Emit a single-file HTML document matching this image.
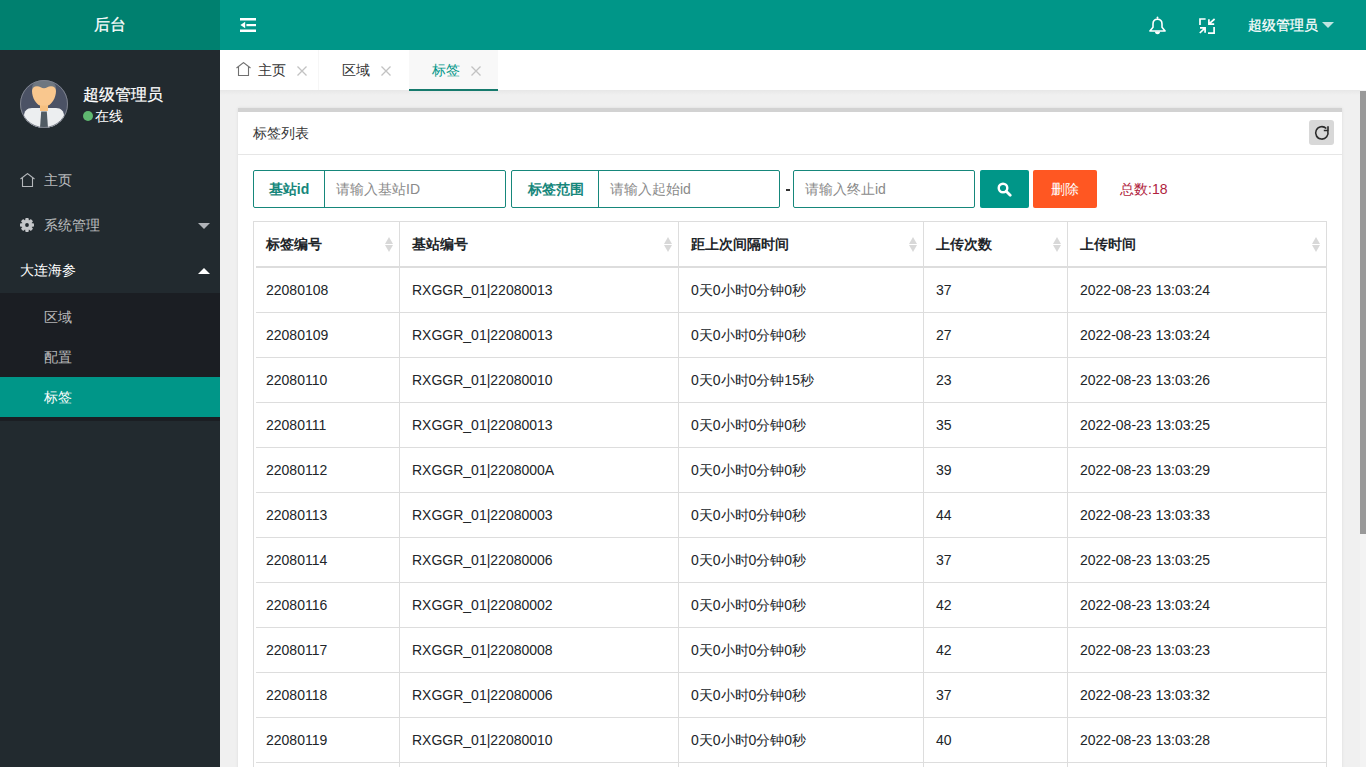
<!DOCTYPE html>
<html><head><meta charset="utf-8"><title>后台</title>
<style>
*{margin:0;padding:0;box-sizing:border-box}
html,body{width:1366px;height:767px;overflow:hidden;background:#f0f0f0;font-family:"Liberation Sans",sans-serif;font-size:14px;color:#333}
.abs{position:absolute}
#logo{position:absolute;left:0;top:0;width:220px;height:50px;background:#00806f;color:#fff;font-size:16px;-webkit-text-stroke:0.25px #fff;line-height:50px;text-align:center}
#hdr{position:absolute;left:220px;top:0;width:1146px;height:50px;background:#009688}
#side{position:absolute;left:0;top:50px;width:220px;height:717px;background:#222a2f}
#tabs{position:absolute;left:220px;top:50px;width:1146px;height:40px;background:#fff}
#tabshadow{position:absolute;left:220px;top:90px;width:1140px;height:5px;background:linear-gradient(#e7e7e7,#f0f0f0)}
#content{position:absolute;left:0;top:0;width:1360px;height:767px;overflow:hidden;pointer-events:none}
#cbg{position:absolute;left:220px;top:90px;width:1140px;height:677px;background:#f0f0f0}
#panel{position:absolute;left:238px;top:108px;width:1104px;height:700px;background:#fff;border-top:4px solid #d2d2d2;box-shadow:0 0 3px rgba(0,0,0,.09)}
.ln{position:absolute;background:#dddddd}
.ln2{position:absolute;background:#dddddd}
.th{position:absolute;font-weight:bold;color:#212529;white-space:nowrap}
.td{position:absolute;color:#212529;white-space:nowrap}
.sort{position:absolute;width:8px;height:15px}
.sort:before{content:"";position:absolute;left:0;top:0;border-left:4px solid transparent;border-right:4px solid transparent;border-bottom:7px solid #d8d8d8}
.sort:after{content:"";position:absolute;left:0;top:8px;border-left:4px solid transparent;border-right:4px solid transparent;border-top:7px solid #d8d8d8}
#sb-track{position:absolute;left:1360px;top:90px;width:6px;height:677px;background:#f3f3f3}
#sb-thumb{position:absolute;left:1360px;top:91px;width:6px;height:443px;background:#999}
.menu{position:absolute;left:0;width:220px;color:rgba(255,255,255,.7);white-space:nowrap}
.sub{position:absolute;left:0;top:243px;width:220px;height:128px;background:#1b1e23}
.box{position:absolute;top:170px;height:38px;border:1px solid #16877b;border-radius:2px;background:#fff;display:flex}
.lab{height:36px;line-height:36px;text-align:center;color:#16877b;font-weight:bold;border-right:1px solid #16877b;flex:none}
.ph{height:36px;line-height:36px;padding-left:11px;color:#8a8a8a;white-space:nowrap}

</style></head><body>
<div id="logo">后台</div>
<div id="hdr"></div>
<svg class="abs" style="left:240px;top:17px" width="16" height="16" viewBox="0 0 16 16">
<rect x="0" y="1" width="16" height="2.5" fill="#fff"/>
<rect x="6.4" y="7" width="9.6" height="2.2" fill="#fff"/>
<polygon points="0.4,8 5.2,4.7 5.2,11.3" fill="#fff"/>
<rect x="0" y="12.5" width="16" height="2.5" fill="#fff"/>
</svg>
<svg class="abs" style="left:1148px;top:15px" width="19" height="21" viewBox="0 0 19 21">
<path d="M9.5 4.3 C6.6 4.3 5 6.3 5 9 L5 12.3 L1.9 16 L17.1 16 L14 12.3 L14 9 C14 6.3 12.4 4.3 9.5 4.3 Z" fill="none" stroke="#fff" stroke-width="1.6" stroke-linejoin="round"/>
<path d="M7 16.6 A2.5 2.6 0 0 0 12 16.6 Z" fill="#fff"/>
<rect x="8.7" y="1.4" width="1.6" height="2.6" rx=".8" fill="#fff"/>
</svg>
<svg class="abs" style="left:1199px;top:18px" width="17" height="17" viewBox="0 0 17 17" fill="none" stroke="#fff" stroke-width="1.7">
<path d="M1 7.1 V1 H6.6"/>
<path d="M15.1 9 V15.1 H9"/>
<path d="M9.9 1.2 V6.1 H15.2 M15.6 1 L10.4 5.6"/>
<path d="M1 9.9 H6.1 V14.8 M0.8 15 L5.6 10.4"/>
</svg>
<div class="abs" style="left:1248px;top:0;height:50px;line-height:50px;color:#fff;font-size:14px;-webkit-text-stroke:0.25px #fff;white-space:nowrap">超级管理员</div>
<div class="abs" style="left:1322px;top:22px;width:0;height:0;border-left:6px solid transparent;border-right:6px solid transparent;border-top:6px solid rgba(255,255,255,.75)"></div>
<div id="tabs"></div>
<div class="abs" style="left:409px;top:50px;width:89px;height:40px;background:#f8f8f8"></div>
<div class="abs" style="left:318px;top:50px;width:1px;height:40px;background:#f6f6f6"></div>
<svg class="abs" style="left:236px;top:62px" width="15" height="15" viewBox="0 0 15 15" fill="none" stroke="#707070" stroke-width="1.1">
<path d="M0.5 6 L7.5 0.6 L14.5 6 M2.5 4.5 V13.5 H12.5 V4.5"/>
</svg>
<div class="abs" style="left:258px;top:50px;height:40px;line-height:40px;color:#333;white-space:nowrap">主页</div>
<div class="abs" style="left:342px;top:50px;height:40px;line-height:40px;color:#333;white-space:nowrap">区域</div>
<div class="abs" style="left:432px;top:50px;height:40px;line-height:40px;color:#009688;white-space:nowrap">标签</div>
<svg class="abs" style="left:297px;top:66px" width="10" height="10" viewBox="0 0 10 10" stroke="#c2c2c2" stroke-width="1.3"><path d="M0.5 0.5 L9.5 9.5 M9.5 0.5 L0.5 9.5"/></svg>
<svg class="abs" style="left:381px;top:66px" width="10" height="10" viewBox="0 0 10 10" stroke="#c2c2c2" stroke-width="1.3"><path d="M0.5 0.5 L9.5 9.5 M9.5 0.5 L0.5 9.5"/></svg>
<svg class="abs" style="left:471px;top:66px" width="10" height="10" viewBox="0 0 10 10" stroke="#c2c2c2" stroke-width="1.3"><path d="M0.5 0.5 L9.5 9.5 M9.5 0.5 L0.5 9.5"/></svg>

<div id="side"></div>
<svg class="abs" style="left:20px;top:80px" width="48" height="48" viewBox="0 0 48 48">
<defs><clipPath id="cc"><circle cx="24" cy="24" r="24"/></clipPath></defs>
<g clip-path="url(#cc)">
<rect width="48" height="48" fill="#4b5265"/>
<ellipse cx="24" cy="8" rx="12" ry="8" fill="#6f7780"/>
<path d="M4 48 V36 C4 31 7 28 12 28 H36 C41 28 44 31 44 36 V48 Z" fill="#eceef0"/>
<rect x="20" y="23" width="8" height="8" fill="#f6c080"/>
<path d="M12 11 C12 8 14 6.3 17 6.3 C20 6.3 21.5 8.3 24 8.3 C26.5 8.3 28 6.3 31 6.3 C34 6.3 36 8 36 11 C36 18 31.5 24.5 28 25.5 H20 C16.5 24.5 12 18 12 11 Z" fill="#f9c78e"/>
<path d="M21.2 31.5 H26.8 L28 48 H20 Z" fill="#505b63"/>
</g>
<circle cx="24" cy="24" r="23.5" fill="none" stroke="#7d828c" stroke-width="1"/>
</svg>
<div class="abs" style="left:83px;top:84px;font-size:16px;line-height:22px;color:#fff;-webkit-text-stroke:0.25px #fff;white-space:nowrap">超级管理员</div>
<div class="abs" style="left:83px;top:111px;width:10px;height:10px;border-radius:50%;background:#5fb870"></div>
<div class="abs" style="left:95px;top:106px;font-size:14px;line-height:20px;color:#fff;white-space:nowrap">在线</div>
<svg class="abs" style="left:20px;top:173px" width="15" height="15" viewBox="0 0 15 15" fill="none" stroke="#b4b7bb" stroke-width="1.1">
<path d="M0.5 6 L7.5 0.6 L14.5 6 M2.5 4.5 V13.5 H12.5 V4.5"/>
</svg>
<div class="menu" style="top:158px;height:45px;line-height:45px;padding-left:44px">主页</div>
<svg class="abs" style="left:20px;top:218px" width="14" height="14" viewBox="-7 -7 14 14">
<g fill="#c4c6c9">
<circle r="5.1"/>
<rect x="-1.75" y="-7" width="3.5" height="14" rx=".9"/>
<rect x="-1.75" y="-7" width="3.5" height="14" rx=".9" transform="rotate(45)"/>
<rect x="-1.75" y="-7" width="3.5" height="14" rx=".9" transform="rotate(90)"/>
<rect x="-1.75" y="-7" width="3.5" height="14" rx=".9" transform="rotate(135)"/>
</g>
<circle r="1.9" fill="#222a2f"/>
</svg>
<div class="menu" style="top:203px;height:45px;line-height:45px;padding-left:44px">系统管理</div>
<div class="abs" style="left:198px;top:223px;border-left:6px solid transparent;border-right:6px solid transparent;border-top:6px solid #b0b3b8"></div>
<div class="menu" style="top:248px;height:45px;line-height:45px;padding-left:20px;color:#fff">大连海参</div>
<div class="abs" style="left:198px;top:268px;border-left:6px solid transparent;border-right:6px solid transparent;border-bottom:6px solid #fff"></div>
<div class="abs" style="left:0;top:293px;width:220px;height:128px;background:#1b1e23"></div>
<div class="menu" style="top:297px;height:40px;line-height:40px;padding-left:44px">区域</div>
<div class="menu" style="top:337px;height:40px;line-height:40px;padding-left:44px">配置</div>
<div class="menu" style="top:377px;height:40px;line-height:40px;padding-left:44px;background:#009688;color:#fff">标签</div>

<div id="content">
<div id="tabshadow"></div>
<div style="position:absolute;left:409px;top:89px;width:89px;height:2px;background:#167a6d"></div>
<div id="panel"></div>
<div class="abs" style="left:253px;top:112px;height:42px;line-height:42px;color:#333;white-space:nowrap">标签列表</div>
<div class="abs" style="left:238px;top:154px;width:1104px;height:1px;background:#e6e6e6"></div>
<div class="abs" style="left:1309px;top:120px;width:25px;height:25px;border-radius:3px;background:#d8d8d8"></div>
<svg class="abs" style="left:1313px;top:124px" width="18" height="18" viewBox="0 0 18 18" fill="none" stroke="#2b2b2b" stroke-width="1.6">
<path d="M13.3 4.55 A6.2 6.2 0 1 0 14.8 7.1"/>
<path d="M15 2.2 V6.5 H10.8"/>
</svg>
<div class="box" style="left:253px;width:253px"><div class="lab" style="width:71px">基站id</div><div class="ph">请输入基站ID</div></div>
<div class="box" style="left:511px;width:269px"><div class="lab" style="width:87px;padding-left:1px">标签范围</div><div class="ph">请输入起始id</div></div>
<div class="abs" style="left:786px;top:189px;width:4px;height:1.5px;background:#333"></div>
<div class="box" style="left:793px;width:182px"><div class="ph" style="border-left:none">请输入终止id</div></div>
<div class="abs" style="left:980px;top:170px;width:49px;height:38px;border-radius:2px;background:#009688"></div>
<svg class="abs" style="left:997px;top:182px" width="15" height="15" viewBox="0 0 15 15" fill="none" stroke="#fff">
<circle cx="6" cy="6" r="4.3" stroke-width="2.4"/>
<path d="M9.2 9.2 L13.2 13.2" stroke-width="2.8" stroke-linecap="round"/>
</svg>
<div class="abs" style="left:1033px;top:170px;width:64px;height:38px;line-height:38px;border-radius:2px;background:#ff5722;color:#fff;text-align:center">删除</div>
<div class="abs" style="left:1120px;top:170px;height:38px;line-height:38px;color:#b0223c;white-space:nowrap">总数:18</div>

<div class="ln" style="left:253px;top:221px;width:1074px;height:1px"></div>
<div class="ln" style="left:253px;top:221px;width:1px;height:596px"></div>
<div class="ln" style="left:399px;top:221px;width:1px;height:596px"></div>
<div class="ln" style="left:678px;top:221px;width:1px;height:596px"></div>
<div class="ln" style="left:923px;top:221px;width:1px;height:596px"></div>
<div class="ln" style="left:1067px;top:221px;width:1px;height:596px"></div>
<div class="ln" style="left:1326px;top:221px;width:1px;height:596px"></div>
<div class="ln2" style="left:256px;top:266px;width:1071px;height:2px"></div>
<div class="ln" style="left:256px;top:312px;width:1071px;height:1px"></div>
<div class="ln" style="left:256px;top:357px;width:1071px;height:1px"></div>
<div class="ln" style="left:256px;top:402px;width:1071px;height:1px"></div>
<div class="ln" style="left:256px;top:447px;width:1071px;height:1px"></div>
<div class="ln" style="left:256px;top:492px;width:1071px;height:1px"></div>
<div class="ln" style="left:256px;top:537px;width:1071px;height:1px"></div>
<div class="ln" style="left:256px;top:582px;width:1071px;height:1px"></div>
<div class="ln" style="left:256px;top:627px;width:1071px;height:1px"></div>
<div class="ln" style="left:256px;top:672px;width:1071px;height:1px"></div>
<div class="ln" style="left:256px;top:717px;width:1071px;height:1px"></div>
<div class="ln" style="left:256px;top:762px;width:1071px;height:1px"></div>
<div class="ln" style="left:256px;top:807px;width:1071px;height:1px"></div>
<div class="th" style="left:266px;top:222px;height:44px;line-height:44px">标签编号</div>
<div class="sort" style="left:385px;top:237px"></div>
<div class="th" style="left:412px;top:222px;height:44px;line-height:44px">基站编号</div>
<div class="sort" style="left:664px;top:237px"></div>
<div class="th" style="left:691px;top:222px;height:44px;line-height:44px">距上次间隔时间</div>
<div class="sort" style="left:909px;top:237px"></div>
<div class="th" style="left:936px;top:222px;height:44px;line-height:44px">上传次数</div>
<div class="sort" style="left:1053px;top:237px"></div>
<div class="th" style="left:1080px;top:222px;height:44px;line-height:44px">上传时间</div>
<div class="sort" style="left:1312px;top:237px"></div>
<div class="td" style="left:266px;top:268px;height:44px;line-height:44px">22080108</div>
<div class="td" style="left:412px;top:268px;height:44px;line-height:44px">RXGGR_01|22080013</div>
<div class="td" style="left:691px;top:268px;height:44px;line-height:44px">0天0小时0分钟0秒</div>
<div class="td" style="left:936px;top:268px;height:44px;line-height:44px">37</div>
<div class="td" style="left:1080px;top:268px;height:44px;line-height:44px">2022-08-23 13:03:24</div>
<div class="td" style="left:266px;top:313px;height:44px;line-height:44px">22080109</div>
<div class="td" style="left:412px;top:313px;height:44px;line-height:44px">RXGGR_01|22080013</div>
<div class="td" style="left:691px;top:313px;height:44px;line-height:44px">0天0小时0分钟0秒</div>
<div class="td" style="left:936px;top:313px;height:44px;line-height:44px">27</div>
<div class="td" style="left:1080px;top:313px;height:44px;line-height:44px">2022-08-23 13:03:24</div>
<div class="td" style="left:266px;top:358px;height:44px;line-height:44px">22080110</div>
<div class="td" style="left:412px;top:358px;height:44px;line-height:44px">RXGGR_01|22080010</div>
<div class="td" style="left:691px;top:358px;height:44px;line-height:44px">0天0小时0分钟15秒</div>
<div class="td" style="left:936px;top:358px;height:44px;line-height:44px">23</div>
<div class="td" style="left:1080px;top:358px;height:44px;line-height:44px">2022-08-23 13:03:26</div>
<div class="td" style="left:266px;top:403px;height:44px;line-height:44px">22080111</div>
<div class="td" style="left:412px;top:403px;height:44px;line-height:44px">RXGGR_01|22080013</div>
<div class="td" style="left:691px;top:403px;height:44px;line-height:44px">0天0小时0分钟0秒</div>
<div class="td" style="left:936px;top:403px;height:44px;line-height:44px">35</div>
<div class="td" style="left:1080px;top:403px;height:44px;line-height:44px">2022-08-23 13:03:25</div>
<div class="td" style="left:266px;top:448px;height:44px;line-height:44px">22080112</div>
<div class="td" style="left:412px;top:448px;height:44px;line-height:44px">RXGGR_01|2208000A</div>
<div class="td" style="left:691px;top:448px;height:44px;line-height:44px">0天0小时0分钟0秒</div>
<div class="td" style="left:936px;top:448px;height:44px;line-height:44px">39</div>
<div class="td" style="left:1080px;top:448px;height:44px;line-height:44px">2022-08-23 13:03:29</div>
<div class="td" style="left:266px;top:493px;height:44px;line-height:44px">22080113</div>
<div class="td" style="left:412px;top:493px;height:44px;line-height:44px">RXGGR_01|22080003</div>
<div class="td" style="left:691px;top:493px;height:44px;line-height:44px">0天0小时0分钟0秒</div>
<div class="td" style="left:936px;top:493px;height:44px;line-height:44px">44</div>
<div class="td" style="left:1080px;top:493px;height:44px;line-height:44px">2022-08-23 13:03:33</div>
<div class="td" style="left:266px;top:538px;height:44px;line-height:44px">22080114</div>
<div class="td" style="left:412px;top:538px;height:44px;line-height:44px">RXGGR_01|22080006</div>
<div class="td" style="left:691px;top:538px;height:44px;line-height:44px">0天0小时0分钟0秒</div>
<div class="td" style="left:936px;top:538px;height:44px;line-height:44px">37</div>
<div class="td" style="left:1080px;top:538px;height:44px;line-height:44px">2022-08-23 13:03:25</div>
<div class="td" style="left:266px;top:583px;height:44px;line-height:44px">22080116</div>
<div class="td" style="left:412px;top:583px;height:44px;line-height:44px">RXGGR_01|22080002</div>
<div class="td" style="left:691px;top:583px;height:44px;line-height:44px">0天0小时0分钟0秒</div>
<div class="td" style="left:936px;top:583px;height:44px;line-height:44px">42</div>
<div class="td" style="left:1080px;top:583px;height:44px;line-height:44px">2022-08-23 13:03:24</div>
<div class="td" style="left:266px;top:628px;height:44px;line-height:44px">22080117</div>
<div class="td" style="left:412px;top:628px;height:44px;line-height:44px">RXGGR_01|22080008</div>
<div class="td" style="left:691px;top:628px;height:44px;line-height:44px">0天0小时0分钟0秒</div>
<div class="td" style="left:936px;top:628px;height:44px;line-height:44px">42</div>
<div class="td" style="left:1080px;top:628px;height:44px;line-height:44px">2022-08-23 13:03:23</div>
<div class="td" style="left:266px;top:673px;height:44px;line-height:44px">22080118</div>
<div class="td" style="left:412px;top:673px;height:44px;line-height:44px">RXGGR_01|22080006</div>
<div class="td" style="left:691px;top:673px;height:44px;line-height:44px">0天0小时0分钟0秒</div>
<div class="td" style="left:936px;top:673px;height:44px;line-height:44px">37</div>
<div class="td" style="left:1080px;top:673px;height:44px;line-height:44px">2022-08-23 13:03:32</div>
<div class="td" style="left:266px;top:718px;height:44px;line-height:44px">22080119</div>
<div class="td" style="left:412px;top:718px;height:44px;line-height:44px">RXGGR_01|22080010</div>
<div class="td" style="left:691px;top:718px;height:44px;line-height:44px">0天0小时0分钟0秒</div>
<div class="td" style="left:936px;top:718px;height:44px;line-height:44px">40</div>
<div class="td" style="left:1080px;top:718px;height:44px;line-height:44px">2022-08-23 13:03:28</div>
<div class="td" style="left:266px;top:763px;height:44px;line-height:44px">22080120</div>
<div class="td" style="left:412px;top:763px;height:44px;line-height:44px">RXGGR_01|22080013</div>
<div class="td" style="left:691px;top:763px;height:44px;line-height:44px">0天0小时0分钟0秒</div>
<div class="td" style="left:936px;top:763px;height:44px;line-height:44px">36</div>
<div class="td" style="left:1080px;top:763px;height:44px;line-height:44px">2022-08-23 13:03:27</div>
</div>
<div id="sb-track"></div><div id="sb-thumb"></div>
</body></html>
